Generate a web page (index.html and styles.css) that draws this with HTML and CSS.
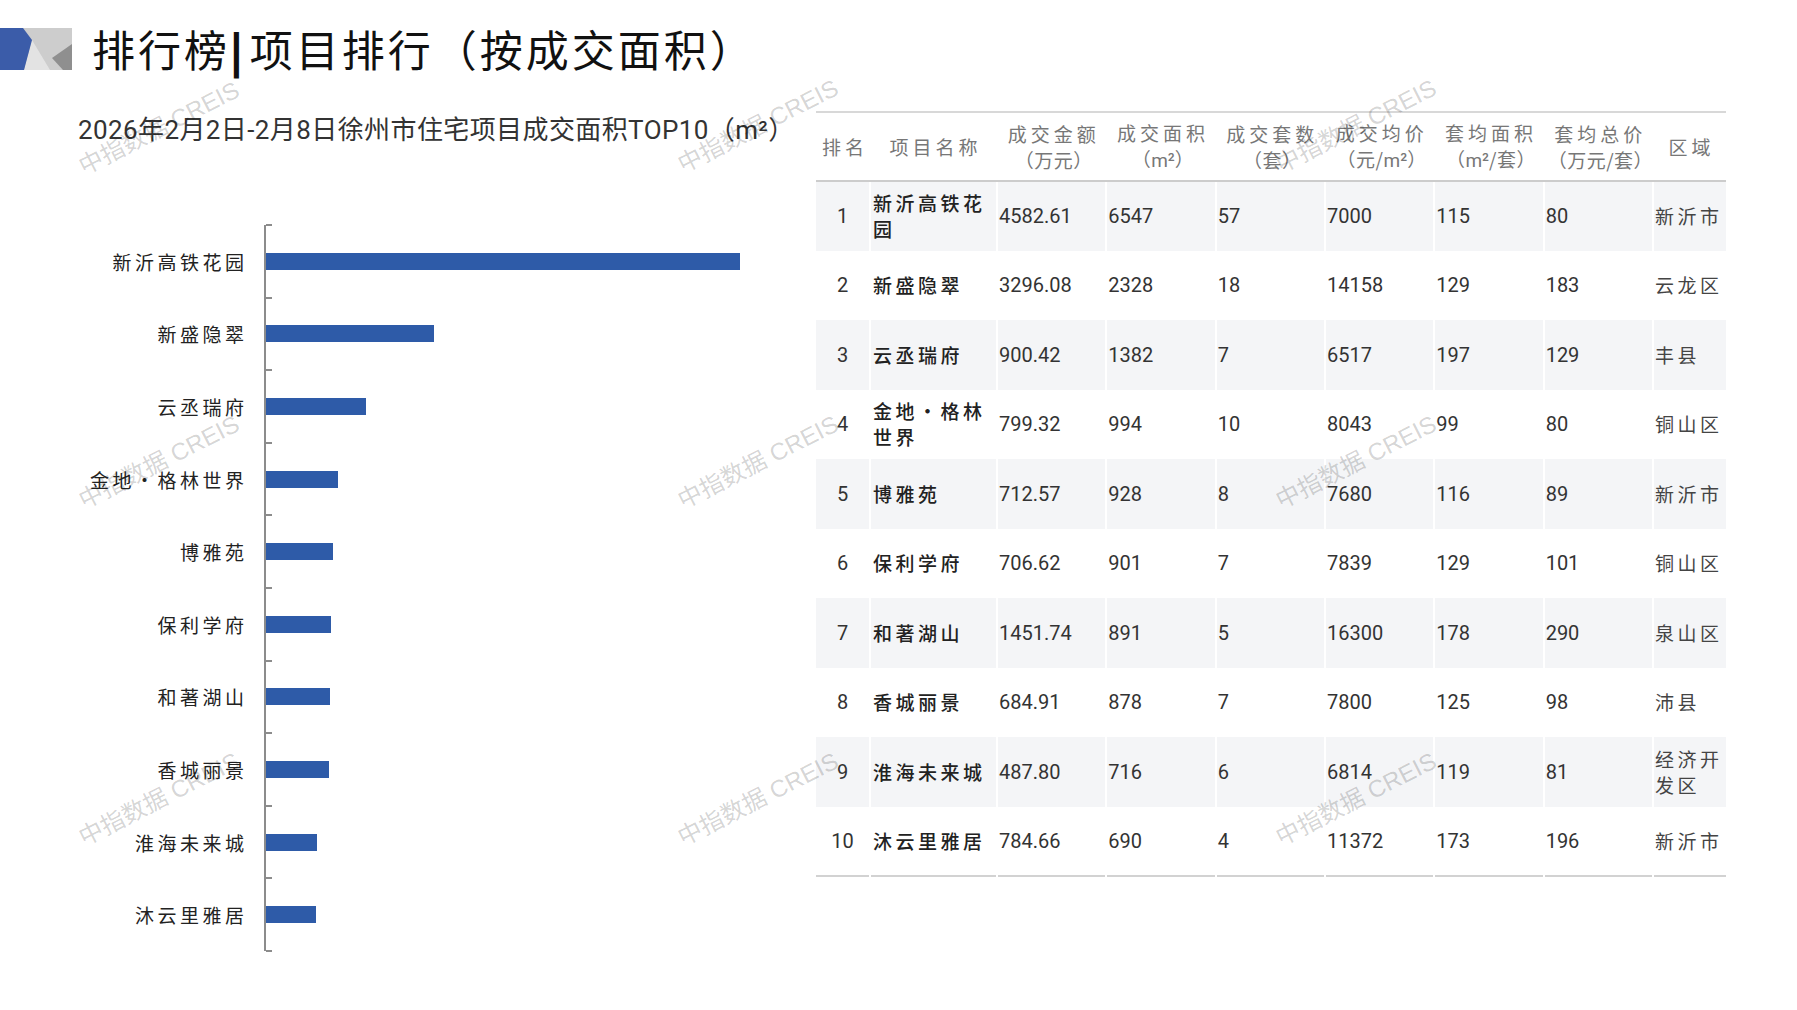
FILE: index.html
```html
<!DOCTYPE html>
<html lang="zh-CN">
<head>
<meta charset="utf-8">
<title>排行榜|项目排行（按成交面积）</title>
<link rel="stylesheet" href="styles.css">
</head>
<body>
<div class="page">
  <div class="header">
    <svg class="logo" viewBox="0 0 72 42" xmlns="http://www.w3.org/2000/svg">
      <rect x="0" y="0" width="72" height="42" fill="#cdcdcd"/>
      <polygon points="32,12 24,42 50,42" fill="#e3e3e3"/>
      <polygon points="72,16 52,30 63,42 72,42" fill="#8f8f8f"/>
      <polygon points="0,0 23,0 32,12 24,42 0,42" fill="#3b5ca9"/>
    </svg>
    <h1 class="title">排行榜<span class="bar-sep">|</span>项目排行（按成交面积）</h1>
  </div>

  <div class="main">
    <section class="left">
      <h2 class="subtitle">2026年2月2日-2月8日徐州市住宅项目成交面积TOP10（m²）</h2>
      <div class="chart">
        <div class="crow"><div class="clabel">新沂高铁花园</div><div class="plot"><div class="bar" style="width:474.6px"></div></div></div>
        <div class="crow"><div class="clabel">新盛隐翠</div><div class="plot"><div class="bar" style="width:168.8px"></div></div></div>
        <div class="crow"><div class="clabel">云丞瑞府</div><div class="plot"><div class="bar" style="width:100.2px"></div></div></div>
        <div class="crow"><div class="clabel">金地·格林世界</div><div class="plot"><div class="bar" style="width:72px"></div></div></div>
        <div class="crow"><div class="clabel">博雅苑</div><div class="plot"><div class="bar" style="width:67.3px"></div></div></div>
        <div class="crow"><div class="clabel">保利学府</div><div class="plot"><div class="bar" style="width:65.3px"></div></div></div>
        <div class="crow"><div class="clabel">和著湖山</div><div class="plot"><div class="bar" style="width:64.6px"></div></div></div>
        <div class="crow"><div class="clabel">香城丽景</div><div class="plot"><div class="bar" style="width:63.7px"></div></div></div>
        <div class="crow"><div class="clabel">淮海未来城</div><div class="plot"><div class="bar" style="width:51.9px"></div></div></div>
        <div class="crow"><div class="clabel">沐云里雅居</div><div class="plot"><div class="bar" style="width:50px"></div></div></div>
      </div>
    </section>

    <section class="right">
      <table class="rank">
        <colgroup>
          <col class="c-rank"><col class="c-name">
          <col class="c-num"><col class="c-num"><col class="c-num"><col class="c-num"><col class="c-num"><col class="c-num">
          <col class="c-region">
        </colgroup>
        <thead>
          <tr>
            <th>排名</th>
            <th>项目名称</th>
            <th>成交金额<br><span class="sub">（万元）</span></th>
            <th>成交面积<br><span class="sub">（<span class="u">m²</span>）</span></th>
            <th>成交套数<br><span class="sub">（套）</span></th>
            <th>成交均价<br><span class="sub">（元/<span class="u">m²</span>）</span></th>
            <th>套均面积<br><span class="sub">（<span class="u">m²</span>/套）</span></th>
            <th>套均总价<br><span class="sub">（万元/套）</span></th>
            <th>区域</th>
          </tr>
        </thead>
        <tbody>
          <tr><td class="rk">1</td><td class="nm">新沂高铁花园</td><td>4582.61</td><td>6547</td><td>57</td><td>7000</td><td>115</td><td>80</td><td class="rg">新沂市</td></tr>
          <tr><td class="rk">2</td><td class="nm">新盛隐翠</td><td>3296.08</td><td>2328</td><td>18</td><td>14158</td><td>129</td><td>183</td><td class="rg">云龙区</td></tr>
          <tr><td class="rk">3</td><td class="nm">云丞瑞府</td><td>900.42</td><td>1382</td><td>7</td><td>6517</td><td>197</td><td>129</td><td class="rg">丰县</td></tr>
          <tr><td class="rk">4</td><td class="nm">金地·格林世界</td><td>799.32</td><td>994</td><td>10</td><td>8043</td><td>99</td><td>80</td><td class="rg">铜山区</td></tr>
          <tr><td class="rk">5</td><td class="nm">博雅苑</td><td>712.57</td><td>928</td><td>8</td><td>7680</td><td>116</td><td>89</td><td class="rg">新沂市</td></tr>
          <tr><td class="rk">6</td><td class="nm">保利学府</td><td>706.62</td><td>901</td><td>7</td><td>7839</td><td>129</td><td>101</td><td class="rg">铜山区</td></tr>
          <tr><td class="rk">7</td><td class="nm">和著湖山</td><td>1451.74</td><td>891</td><td>5</td><td>16300</td><td>178</td><td>290</td><td class="rg">泉山区</td></tr>
          <tr><td class="rk">8</td><td class="nm">香城丽景</td><td>684.91</td><td>878</td><td>7</td><td>7800</td><td>125</td><td>98</td><td class="rg">沛县</td></tr>
          <tr><td class="rk">9</td><td class="nm">淮海未来城</td><td>487.80</td><td>716</td><td>6</td><td>6814</td><td>119</td><td>81</td><td class="rg">经济开发区</td></tr>
          <tr><td class="rk">10</td><td class="nm">沐云里雅居</td><td>784.66</td><td>690</td><td>4</td><td>11372</td><td>173</td><td>196</td><td class="rg">新沂市</td></tr>
        </tbody>
      </table>
    </section>
  </div>

  <div class="wm wm-1">中指数据 CREIS</div>
  <div class="wm wm-2">中指数据 CREIS</div>
  <div class="wm wm-3">中指数据 CREIS</div>
  <div class="wm wm-4">中指数据 CREIS</div>
  <div class="wm wm-5">中指数据 CREIS</div>
  <div class="wm wm-6">中指数据 CREIS</div>
  <div class="wm wm-7">中指数据 CREIS</div>
  <div class="wm wm-8">中指数据 CREIS</div>
  <div class="wm wm-9">中指数据 CREIS</div>
</div>
</body>
</html>
```

FILE: styles.css
```css
* { box-sizing: border-box; margin: 0; padding: 0; }

body {
  margin: 0;
  background: #ffffff;
  font-family: "Noto Sans CJK SC", sans-serif;
  color: #222;
}

.page {
  width: 1797px;
  height: 1010px;
  position: relative;
  overflow: hidden;
  background: #fff;
}

/* ---------- header ---------- */
.header {
  display: flex;
  align-items: center;
  height: 42px;
  margin-top: 28px;
}

.logo {
  display: block;
  width: 72px;
  height: 42px;
  flex: none;
}

.title {
  margin-left: 20px;
  font-size: 43px;
  font-weight: 400;
  letter-spacing: 3px;
  line-height: 42px;
  color: #111;
  white-space: nowrap;
}

.bar-sep {
  font-family: "DejaVu Sans", sans-serif;
  font-weight: 700;
  font-size: 46px;
  margin: 0 2px 0 -2px;
}

/* ---------- main ---------- */
.main {
  display: flex;
}

.left {
  width: 816px;
  flex: none;
  padding-left: 78px;
}

.subtitle {
  margin-top: 45px;
  font-family: Roboto, "Noto Sans CJK SC", sans-serif;
  font-size: 26px;
  font-weight: 400;
  letter-spacing: 0.4px;
  line-height: 30px;
  color: #333;
  white-space: nowrap;
}

.chart {
  margin-top: 80px;
}

.crow {
  display: flex;
  height: 72.6px;
}

.clabel {
  width: 169.5px;
  flex: none;
  display: flex;
  align-items: center;
  justify-content: flex-end;
  font-size: 19px;
  letter-spacing: 3.5px;
  color: #222;
  white-space: nowrap;
}

.plot {
  margin-left: 16px;
  flex: 1;
  display: flex;
  align-items: center;
  border-left: 2px solid #8c8c8c;
  position: relative;
}

.plot::before {
  content: "";
  position: absolute;
  left: 0;
  top: -1px;
  width: 6px;
  height: 2px;
  background: #8c8c8c;
}

.crow:last-child .plot::after {
  content: "";
  position: absolute;
  left: 0;
  bottom: -1px;
  width: 6px;
  height: 2px;
  background: #8c8c8c;
}

.bar {
  height: 17px;
  background: #2e5ba8;
}

/* ---------- table ---------- */
.right {
  width: 910px;
  flex: none;
}

.rank {
  margin-top: 41px;
  width: 910px;
  table-layout: fixed;
  border-collapse: collapse;
  border-top: 2px solid #d8d8d8;
  border-bottom: 2px solid #d2d2d2;
}

.c-rank { width: 54px; }
.c-name { width: 127px; }
.c-num { width: 109.33px; }
.c-region { width: 73px; }

.rank th {
  height: 69px;
  font-size: 19px;
  font-weight: 400;
  letter-spacing: 4px;
  line-height: 26px;
  color: #777;
  text-align: center;
  vertical-align: middle;
  padding-left: 4px;
  white-space: nowrap;
  border-bottom: 2px solid #cccccc;
}

.rank th .sub {
  letter-spacing: 0.5px;
}

.rank th .u {
  font-family: Roboto, sans-serif;
  letter-spacing: 0;
}

.rank td {
  height: 69.5px;
  font-family: Roboto, "Noto Sans CJK SC", sans-serif;
  font-size: 20px;
  color: #333;
  text-align: left;
  vertical-align: middle;
  padding-left: 1px;
  border-left: 2px solid #fff;
}

.rank td:first-child {
  border-left: none;
}

.rank tbody tr:nth-child(odd) td {
  background: #f4f5f7;
}

.rank td.rk {
  text-align: center;
  padding-left: 0;
}

.rank td.nm {
  font-family: "Noto Sans CJK SC", sans-serif;
  font-size: 19px;
  letter-spacing: 3.5px;
  line-height: 26px;
  color: #222;
  font-weight: 500;
  padding-left: 2px;
  padding-right: 10px;
}

.rank td.rg {
  font-family: "Noto Sans CJK SC", sans-serif;
  font-size: 19px;
  letter-spacing: 3.5px;
  line-height: 26px;
  color: #444;
}

/* ---------- watermarks ---------- */
.wm {
  position: absolute;
  font-family: "Liberation Sans", "Noto Sans CJK SC", sans-serif;
  font-size: 24px;
  color: rgba(0, 0, 0, 0.18);
  white-space: nowrap;
  transform: translate(-50%, -50%) rotate(-27deg);
  pointer-events: none;
}

.wm-1 { left: 158px; top: 126px; }
.wm-2 { left: 757px; top: 124px; }
.wm-3 { left: 1355px; top: 124px; }
.wm-4 { left: 158px; top: 460px; }
.wm-5 { left: 757px; top: 460px; }
.wm-6 { left: 1355px; top: 460px; }
.wm-7 { left: 158px; top: 797px; }
.wm-8 { left: 757px; top: 797px; }
.wm-9 { left: 1355px; top: 797px; }
```
